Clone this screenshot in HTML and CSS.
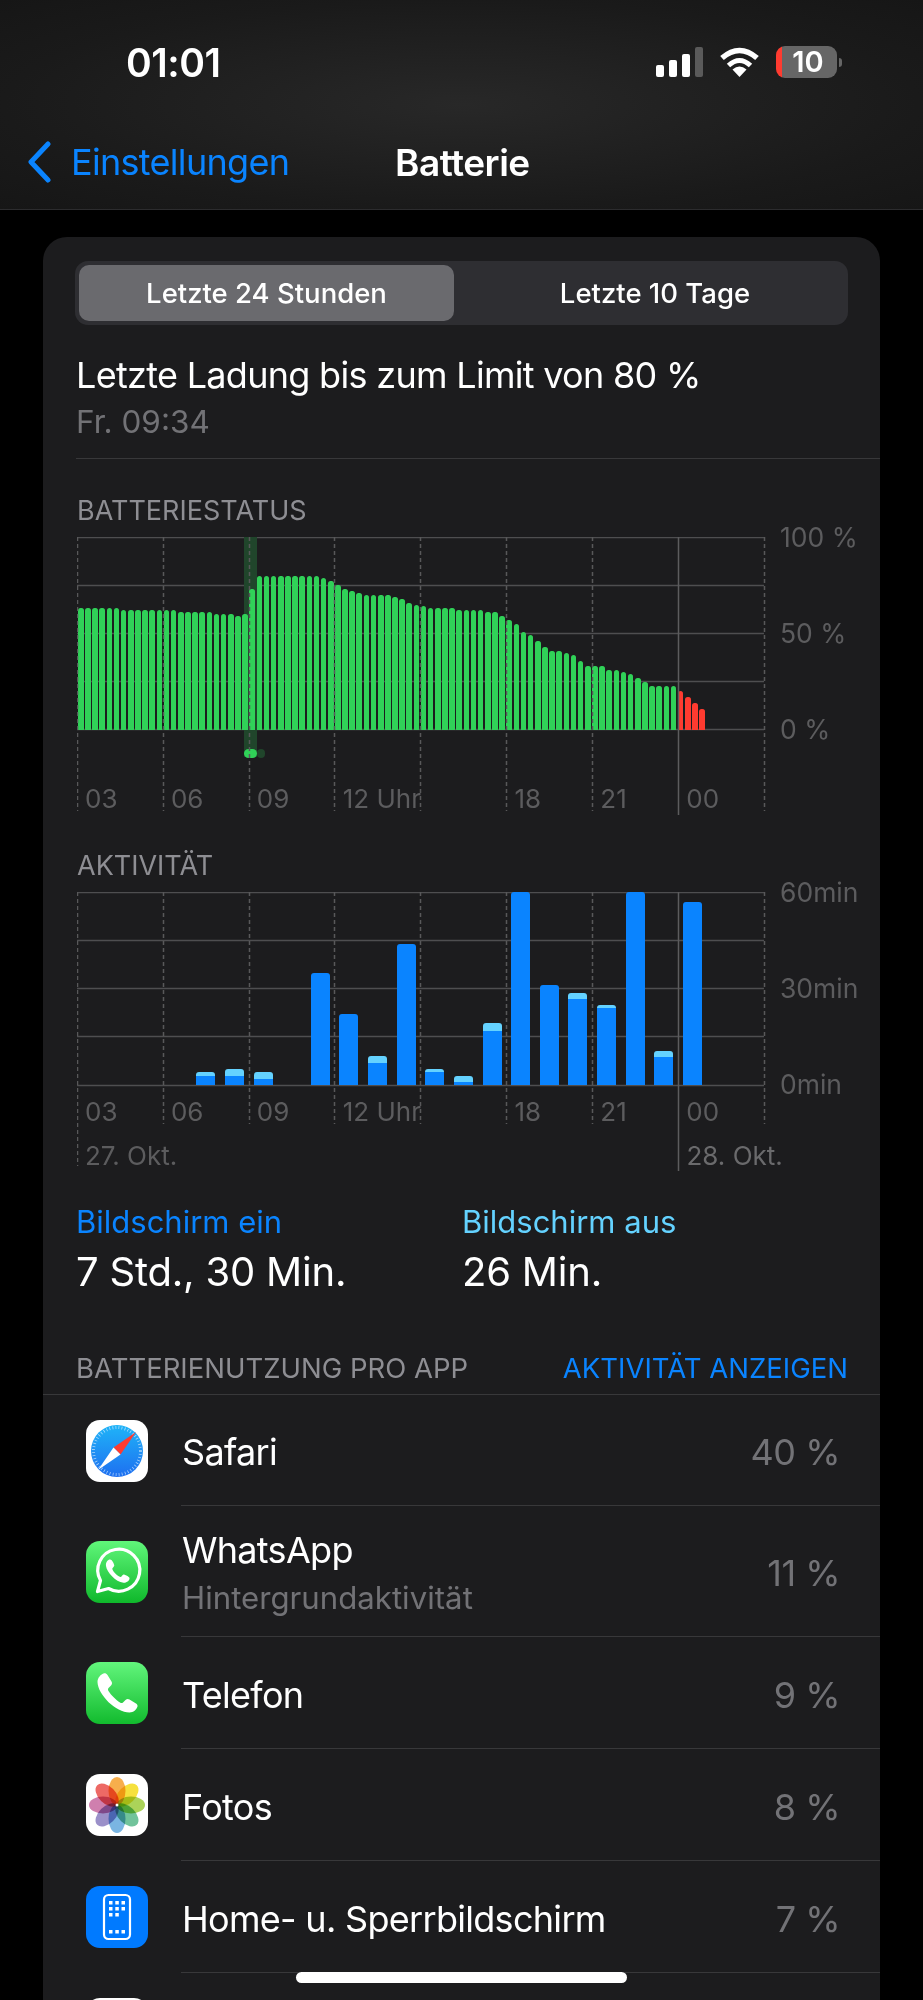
FILE: index.html
```html
<!DOCTYPE html>
<html lang="de">
<head>
    <meta charset="UTF-8">
    <meta name="viewport" content="width=device-width, initial-scale=1.0">
    <title>Batterie</title>
    <link rel="stylesheet" href="styles.css">
</head>
<body>

    <header class="topbar">
        <div class="status">
            <span class="clock">01:01</span>
            <div class="status-icons">
                <div class="signal"><i class="s1"></i><i class="s2"></i><i class="s3"></i><i class="s4"></i></div>
                <svg class="wifi" width="41" height="30" viewBox="0 0 41 30">
                    <path d="M20.500 30 L13.500 22.500 Q20.500 16.500 27.500 22.500 Z" fill="#fff"/>
                    <path d="M9.500 18.500 Q20.500 8.500 31.500 18.500" fill="none" stroke="#fff" stroke-width="5"/>
                    <path d="M3 11 Q20.500 -4 38 11" fill="none" stroke="#fff" stroke-width="5.500"/>
                </svg>
                <div class="battery">
                    <div class="battery-body"><span>10</span></div>
                    <i class="battery-nub"></i>
                </div>
            </div>
        </div>
        <nav class="nav">
            <a class="back">
                <svg width="25" height="42" viewBox="0 0 25 42"><path d="M21 3 L4 21 L21 39" fill="none" stroke="#0a84ff" stroke-width="5" stroke-linecap="round" stroke-linejoin="round"/></svg>
                <span>Einstellungen</span>
            </a>
            <h1>Batterie</h1>
        </nav>
    </header>

    <main class="card">
        <div class="segmented">
            <div class="seg seg-active">Letzte 24 Stunden</div>
            <div class="seg">Letzte 10 Tage</div>
        </div>

        <div class="last-charge">
            <div class="last-title">Letzte Ladung bis zum Limit von 80 %</div>
            <div class="last-time">Fr. 09:34</div>
        </div>

        <section class="chart-section battery-section">
            <h2 class="chart-title">BATTERIESTATUS</h2>
            <div class="chart chart-battery">
                <svg class="grid" width="690" height="280">
                    <path class="grid-h" d="M0 .5H687M0 48.500H687M0 96.500H687M0 144.500H687M0 192.500H687"/>
                </svg>
                <div class="charging-band"></div>
                <div class="charging-pill"></div>
                <div class="charging-dot"></div>
                <div class="level-bars">
                    <i style="height:63%"></i><i style="height:63%"></i><i style="height:63%"></i><i style="height:63%"></i><i style="height:63%"></i><i style="height:63%"></i>
                    <i style="height:62%"></i><i style="height:62%"></i><i style="height:62%"></i><i style="height:62%"></i><i style="height:62%"></i><i style="height:62%"></i><i style="height:62%"></i><i style="height:62%"></i>
                    <i style="height:61%"></i><i style="height:61%"></i><i style="height:61%"></i><i style="height:61%"></i><i style="height:61%"></i>
                    <i style="height:60%"></i><i style="height:60%"></i><i style="height:60%"></i><i style="height:59%"></i><i style="height:60%"></i>
                    <i style="height:73%"></i>
                    <i style="height:80%"></i><i style="height:80%"></i><i style="height:80%"></i><i style="height:80%"></i><i style="height:80%"></i><i style="height:80%"></i><i style="height:80%"></i><i style="height:80%"></i><i style="height:80%"></i>
                    <i style="height:79%"></i><i style="height:77%"></i><i style="height:75%"></i><i style="height:73%"></i><i style="height:72%"></i><i style="height:71%"></i>
                    <i style="height:70%"></i><i style="height:70%"></i><i style="height:70%"></i><i style="height:70%"></i>
                    <i style="height:69%"></i><i style="height:68%"></i><i style="height:66%"></i><i style="height:65%"></i><i style="height:64%"></i>
                    <i style="height:63%"></i><i style="height:63%"></i><i style="height:63%"></i><i style="height:63%"></i>
                    <i style="height:62%"></i><i style="height:62%"></i><i style="height:62%"></i><i style="height:62%"></i>
                    <i style="height:61%"></i><i style="height:61%"></i><i style="height:59%"></i><i style="height:57%"></i><i style="height:55%"></i><i style="height:51%"></i><i style="height:49%"></i><i style="height:46%"></i><i style="height:43%"></i>
                    <i style="height:41%"></i><i style="height:41%"></i><i style="height:40%"></i><i style="height:39%"></i><i style="height:36%"></i>
                    <i style="height:33%"></i><i style="height:33%"></i><i style="height:33%"></i><i style="height:31%"></i><i style="height:31%"></i>
                    <i style="height:30%"></i><i style="height:29%"></i><i style="height:27%"></i><i style="height:25%"></i>
                    <i style="height:23%"></i><i style="height:23%"></i><i style="height:23%"></i><i style="height:23%"></i>
                    <i class="low" style="height:20%"></i><i class="low" style="height:17%"></i><i class="low" style="height:14%"></i><i class="low" style="height:11%"></i>
                </div>
                <svg class="grid" width="690" height="280">
                    <path class="grid-v" d="M.5 0V274M86.500 0V274M172.500 0V274M257.500 0V274M343.500 0V274M429.500 0V274M515.500 0V274M687.500 0V274"/>
                    <path class="grid-now" d="M601.500 0V278"/>
                </svg>
                <div class="y-labels">
                    <span>100 %</span>
                    <span>50 %</span>
                    <span>0 %</span>
                </div>
                <div class="x-labels">
                    <span>03</span><span>06</span><span>09</span><span>12 Uhr</span><span></span><span>18</span><span>21</span><span>00</span>
                </div>
            </div>
        </section>

        <section class="chart-section activity-section">
            <h2 class="chart-title">AKTIVITÄT</h2>
            <div class="chart chart-activity">
                <svg class="grid" width="690" height="310">
                    <path class="grid-h" d="M0 .5H687M0 48.500H687M0 96.500H687M0 144.500H687M0 193.500H687"/>
                </svg>
                <div class="usage-bars">
                    <div></div><div></div><div></div><div></div>
                    <div><i class="off" style="height:2%"></i><i class="on" style="height:4.700%"></i></div>
                    <div><i class="off" style="height:3.400%"></i><i class="on" style="height:4.700%"></i></div>
                    <div><i class="off" style="height:3.400%"></i><i class="on" style="height:3.200%"></i></div>
                    <div></div>
                    <div><i class="on" style="height:58%"></i></div>
                    <div><i class="on" style="height:36.600%"></i></div>
                    <div><i class="off" style="height:3.400%"></i><i class="on" style="height:11.400%"></i></div>
                    <div><i class="on" style="height:73.200%"></i></div>
                    <div><i class="off" style="height:1.600%"></i><i class="on" style="height:6.500%"></i></div>
                    <div><i class="off" style="height:3.300%"></i><i class="on" style="height:1.400%"></i></div>
                    <div><i class="off" style="height:4.200%"></i><i class="on" style="height:28%"></i></div>
                    <div><i class="on" style="height:100%"></i></div>
                    <div><i class="on" style="height:51.800%"></i></div>
                    <div><i class="off" style="height:2.900%"></i><i class="on" style="height:44.700%"></i></div>
                    <div><i class="off" style="height:1.700%"></i><i class="on" style="height:40%"></i></div>
                    <div><i class="on" style="height:100%"></i></div>
                    <div><i class="off" style="height:3.100%"></i><i class="on" style="height:14.700%"></i></div>
                    <div><i class="on" style="height:94.800%"></i></div>
                    <div></div><div></div>
                </div>
                <svg class="grid" width="690" height="310">
                    <path class="grid-v" d="M.5 0V274M86.500 0V232M172.500 0V232M257.500 0V232M343.500 0V232M429.500 0V232M515.500 0V232M687.500 0V232"/>
                    <path class="grid-now" d="M601.500 0V279"/>
                </svg>
                <div class="y-labels">
                    <span>60min</span>
                    <span>30min</span>
                    <span>0min</span>
                </div>
                <div class="x-labels">
                    <span>03</span><span>06</span><span>09</span><span>12 Uhr</span><span></span><span>18</span><span>21</span><span>00</span>
                </div>
                <div class="date-labels">
                    <span>27. Okt.</span>
                    <span>28. Okt.</span>
                </div>
            </div>
        </section>

        <div class="screen-times">
            <div>
                <div class="time-label time-on">Bildschirm ein</div>
                <div class="time-value">7 Std., 30 Min.</div>
            </div>
            <div>
                <div class="time-label time-off">Bildschirm aus</div>
                <div class="time-value">26 Min.</div>
            </div>
        </div>

        <div class="usage-head">
            <span>BATTERIENUTZUNG PRO APP</span>
            <a>AKTIVITÄT ANZEIGEN</a>
        </div>

        <ul class="apps">
            <li class="app">
                <svg class="app-icon" viewBox="0 0 62 62">
                    <defs>
                        <linearGradient id="safariBlue" x1="0" y1="0" x2="0" y2="1"><stop offset="0" stop-color="#1fb4f8"/><stop offset="1" stop-color="#1e6ff0"/></linearGradient>
                    </defs>
                    <rect width="62" height="62" rx="14" fill="#fff"/>
                    <circle cx="31" cy="31" r="26" fill="url(#safariBlue)"/>
                    <circle cx="31" cy="31" r="23.500" fill="none" stroke="#d8ecff" stroke-width="3" stroke-dasharray=".8 2.300" opacity=".75"/>
                    <path d="M27.500 27.500 L50 12 L34.500 34.500 Z" fill="#ff3b30"/>
                    <path d="M27.500 27.500 L34.500 34.500 L12 50 Z" fill="#fff"/>
                </svg>
                <div class="app-name">Safari</div>
                <div class="app-value">40 %</div>
            </li>
            <li class="app app-tall">
                <svg class="app-icon" viewBox="0 0 62 62">
                    <defs>
                        <linearGradient id="waGreen" x1="0" y1="0" x2="0" y2="1"><stop offset="0" stop-color="#60f67a"/><stop offset="1" stop-color="#0fb82b"/></linearGradient>
                    </defs>
                    <rect width="62" height="62" rx="14" fill="url(#waGreen)"/>
                    <path d="M11.500 50.500 L14.500 39.500 A21 21 0 1 1 22.500 47.500 Z" fill="none" stroke="#fff" stroke-width="3.200" stroke-linejoin="round"/>
                    <path d="M24 18.500 C22 18.500 19.500 21 20 25 C20.800 31 29.500 41 37.500 41.800 C41 42 43.800 39.500 43.500 36.800 C43.300 35.800 38.500 33.300 37.500 33.500 C36.500 33.800 35.500 36 34.500 36 C31.500 35.500 26.500 30 26.300 27.800 C26.300 26.800 28.300 25.500 28.300 24.500 C28.300 23.500 26.500 18.500 24 18.500 Z" fill="#fff"/>
                </svg>
                <div class="app-name">WhatsApp<small>Hintergrundaktivität</small></div>
                <div class="app-value">11 %</div>
            </li>
            <li class="app">
                <svg class="app-icon" viewBox="0 0 62 62">
                    <defs>
                        <linearGradient id="phoneGreen" x1="0" y1="0" x2="0" y2="1"><stop offset="0" stop-color="#62f57c"/><stop offset="1" stop-color="#12bb2e"/></linearGradient>
                    </defs>
                    <rect width="62" height="62" rx="14" fill="url(#phoneGreen)"/>
                    <path d="M17.500 11.500 C14.500 12.500 11.500 16 11.500 20 C12 33 30 50.500 43.500 50.500 C47.500 50.500 50.500 47.500 51.500 44.500 C51.800 43.200 51 42.200 50 41.500 L43.500 37.500 C42 36.600 40.800 36.800 39.500 38 L37 40.500 C36 41.300 35 41.200 34 40.500 C30 38 25 33 22.500 29 C21.800 28 21.800 27 22.500 26 L25 23.500 C26.200 22.200 26.300 21 25.500 19.500 L21.500 13 C20.500 11.500 19 11 17.500 11.500 Z" fill="#fff"/>
                </svg>
                <div class="app-name">Telefon</div>
                <div class="app-value">9 %</div>
            </li>
            <li class="app">
                <svg class="app-icon" viewBox="0 0 62 62">
                    <rect width="62" height="62" rx="14" fill="#fff"/>
                    <g class="petals">
                        <ellipse cx="31" cy="17" rx="8.500" ry="14" fill="#f6a02c"/>
                        <ellipse cx="31" cy="17" rx="8.500" ry="14" fill="#f5dc1c" transform="rotate(45 31 31)"/>
                        <ellipse cx="31" cy="17" rx="8.500" ry="14" fill="#9ccb3b" transform="rotate(90 31 31)"/>
                        <ellipse cx="31" cy="17" rx="8.500" ry="14" fill="#58b989" transform="rotate(135 31 31)"/>
                        <ellipse cx="31" cy="17" rx="8.500" ry="14" fill="#62a8dd" transform="rotate(180 31 31)"/>
                        <ellipse cx="31" cy="17" rx="8.500" ry="14" fill="#8a7cc0" transform="rotate(225 31 31)"/>
                        <ellipse cx="31" cy="17" rx="8.500" ry="14" fill="#c768a0" transform="rotate(270 31 31)"/>
                        <ellipse cx="31" cy="17" rx="8.500" ry="14" fill="#ea4f4a" transform="rotate(315 31 31)"/>
                    </g>
                    <circle cx="31" cy="31" r="1.500" fill="#fff"/>
                </svg>
                <div class="app-name">Fotos</div>
                <div class="app-value">8 %</div>
            </li>
            <li class="app">
                <svg class="app-icon" viewBox="0 0 62 62">
                    <rect width="62" height="62" rx="14" fill="#007aff"/>
                    <rect x="18" y="9" width="26" height="44" rx="4.500" fill="none" stroke="#fff" stroke-width="2.200"/>
                    <path d="M23 15h3.500v3.500H23zM29.300 15h3.500v3.500h-3.500zM35.500 15H39v3.500h-3.500zM23 21h3.500v3.500H23zM29.300 21h3.500v3.500h-3.500zM35.500 21H39v3.500h-3.500zM23 27h3.500v3.500H23zM29.300 27h3.500v3.500h-3.500zM23 44h3.500v3.500H23zM29.300 44h3.500v3.500h-3.500zM35.500 44H39v3.500h-3.500z" fill="#fff"/>
                </svg>
                <div class="app-name">Home- u. Sperrbildschirm</div>
                <div class="app-value">7 %</div>
            </li>
            <li class="app">
                <svg class="app-icon" viewBox="0 0 62 62"><rect width="62" height="62" rx="14" fill="#fff"/></svg>
            </li>
        </ul>
    </main>

    <div class="home-indicator"></div>

</body>
</html>
```

FILE: styles.css
```css
* {
    box-sizing: border-box;
}

html, body {
    margin: 0;
    height: 2000px;
    overflow: hidden;
}

body {
    font-family: Inter, "Noto Sans", sans-serif;
    background: #000;
    color: #fff;
    position: relative;
}

.topbar {
    height: 210px;
    background: radial-gradient(ellipse at 50% 50%, #282828 0%, #1a1a1a 70%, #161616 100%);
    border-bottom: 1px solid #2c2c2e;
}

.status {
    height: 118px;
    padding: 42px 0 0 126px;
    display: flex;
    justify-content: space-between;
}

.clock {
    font-size: 39px;
    font-weight: 600;
    line-height: 42px;
    letter-spacing: -0.5px;
}

.status-icons {
    display: flex;
    align-items: flex-start;
    gap: 16px;
    padding-right: 81px;
}

.signal {
    display: flex;
    align-items: flex-end;
    gap: 5px;
    height: 30px;
    margin-top: 5px;
}

.signal i {
    width: 8px;
    border-radius: 2px;
    background: #fff;
}

.s1 { height: 12px; }
.s2 { height: 17px; }
.s3 { height: 23px; }
.s4 { height: 30px; background: #5a5a5a !important; }

.wifi {
    margin-top: 5px;
}

.battery {
    display: flex;
    align-items: center;
    margin-top: 4px;
}

.battery-body {
    width: 61px;
    height: 32px;
    border-radius: 9px;
    background: linear-gradient(to right, #ff3b30 6px, #666 6px);
    font-size: 29px;
    font-weight: 600;
    line-height: 32px;
    text-align: center;
    padding-left: 3px;
}

.battery-nub {
    width: 3px;
    height: 9px;
    margin-left: 2px;
    border-radius: 0 3px 3px 0;
    background: #666;
}

.nav {
    position: relative;
    height: 92px;
    display: flex;
    align-items: center;
    padding: 0 0 4px 27px;
}

.back {
    display: flex;
    align-items: center;
    gap: 19px;
    color: #0a84ff;
    font-size: 36px;
    letter-spacing: -0.7px;
}

.nav h1 {
    margin: 0;
    position: absolute;
    left: 395px;
    font-size: 37px;
    font-weight: 600;
    letter-spacing: -0.5px;
}

.card {
    margin: 27px 43px 0 43px;
    height: 1763px;
    overflow: hidden;
    background: #1c1c1e;
    border-radius: 24px 24px 0 0;
    padding-top: 24px;
}

.segmented {
    margin: 0 32px;
    height: 64px;
    padding: 4px;
    display: flex;
    background: #2e2e32;
    border-radius: 13px;
}

.seg {
    width: 375px;
    display: flex;
    align-items: center;
    justify-content: center;
    font-size: 27.500px;
    font-weight: 500;
    border-radius: 10px;
    flex: none;
}

.seg:last-child {
    flex: 1;
    padding-left: 12px;
}

.seg-active {
    background: #6a6a6e;
}

.last-charge {
    margin-left: 33px;
    padding-top: 28px;
    height: 134px;
    border-bottom: 1px solid #38383a;
}

.last-title {
    font-size: 36px;
    line-height: 44px;
    letter-spacing: -0.7px;
}

.last-time {
    font-size: 31.500px;
    line-height: 40px;
    margin-top: 5px;
    color: #727276;
}

.chart-section {
    padding-left: 34px;
}

.battery-section {
    padding-top: 36px;
    height: 391px;
}

.activity-section {
    height: 338px;
}

.chart-title {
    margin: 0;
    font-size: 27px;
    font-weight: 400;
    line-height: 32px;
    color: #8e8e93;
}

.chart {
    position: relative;
    width: 687px;
    margin-top: 10px;
}

.grid {
    position: absolute;
    left: 0;
    top: 0;
}

.grid-h {
    stroke: #4e4e50;
    stroke-width: 1.500;
    fill: none;
}

.grid-v {
    stroke: #58585a;
    stroke-width: 1.500;
    stroke-dasharray: 4 3;
    fill: none;
}

.grid-now {
    stroke: #5c5c5e;
    stroke-width: 1.500;
    fill: none;
}

.charging-band {
    position: absolute;
    left: 167px;
    top: 0;
    width: 13px;
    height: 220px;
    background: #20452b;
}

.charging-pill {
    position: absolute;
    left: 167px;
    top: 212px;
    width: 13px;
    height: 9px;
    border-radius: 5px;
    background: #30d158;
}

.charging-dot {
    position: absolute;
    left: 180px;
    top: 212px;
    width: 8px;
    height: 9px;
    border-radius: 5px;
    background: #20452b;
}

.level-bars {
    position: relative;
    height: 193px;
    padding-left: 1px;
    display: flex;
    align-items: flex-end;
    gap: 1.550px;
}

.level-bars i {
    width: 5.600px;
    flex: none;
    border-radius: 2.500px 2.500px 0 0;
    background: #30d158;
}

.level-bars .low {
    background: #ff3b30;
}

.usage-bars {
    position: relative;
    height: 193px;
    display: grid;
    grid-template-columns: repeat(24, 1fr);
    width: 687px;
}

.usage-bars div {
    height: 193px;
    padding: 0 4.800px;
    display: flex;
    flex-direction: column;
    justify-content: flex-end;
}

.usage-bars .on {
    background: #0a84ff;
}

.usage-bars .off {
    background: #64d2ff;
}

.usage-bars i:first-child {
    border-radius: 3px 3px 0 0;
}

.y-labels {
    position: absolute;
    left: 703px;
    top: -15px;
    height: 222px;
    display: flex;
    flex-direction: column;
    justify-content: space-between;
    font-size: 26.500px;
    line-height: 30px;
    color: #5c5c5e;
    white-space: nowrap;
}

.x-labels {
    display: grid;
    grid-template-columns: repeat(8, 85.900px);
    position: relative;
    font-size: 26px;
    line-height: 30px;
    color: #5c5c5e;
}

.x-labels span {
    padding-left: 8px;
    white-space: nowrap;
}

.chart-battery .x-labels {
    margin-top: 54px;
}

.chart-activity .x-labels {
    margin-top: 12px;
}

.date-labels {
    display: grid;
    grid-template-columns: 601.500px 1fr;
    position: relative;
    margin-top: 14px;
    font-size: 26px;
    line-height: 30px;
    color: #5c5c5e;
    white-space: nowrap;
}

.date-labels span {
    padding-left: 8px;
}

.date-labels span:last-child {
    color: #6a6a6c;
}

.screen-times {
    display: grid;
    grid-template-columns: 386px 1fr;
    padding-left: 33px;
    margin-top: 14px;
}

.time-label {
    font-size: 31px;
    line-height: 40px;
}

.time-on {
    color: #0a84ff;
}

.time-off {
    color: #64d2ff;
}

.time-value {
    font-size: 40px;
    line-height: 50px;
    margin-top: 5px;
    letter-spacing: -0.2px;
}

.usage-head {
    margin-top: 55px;
    height: 43px;
    padding: 0 32px 0 33px;
    display: flex;
    justify-content: space-between;
    align-items: flex-start;
    font-size: 27.500px;
    line-height: 32px;
    color: #8e8e93;
    border-bottom: 1px solid #38383a;
}

.usage-head a {
    color: #0a84ff;
}

.apps {
    list-style: none;
    margin: 0;
    padding: 0;
}

.app {
    height: 112px;
    padding-left: 43px;
    display: flex;
    align-items: center;
    position: relative;
}

.app:first-child {
    height: 111px;
}

.app-tall {
    height: 131px;
}

.app:not(:last-child)::after {
    content: "";
    position: absolute;
    left: 138px;
    right: 0;
    bottom: 0;
    height: 1px;
    background: #38383a;
}

.app-icon {
    width: 62px;
    height: 62px;
    flex: none;
}

.petals ellipse {
    mix-blend-mode: multiply;
    opacity: .85;
}

.app-name {
    margin: 3px 0 0 34px;
    flex: 1;
    font-size: 36px;
    line-height: 44px;
    letter-spacing: -0.7px;
}

.app-name small {
    display: block;
    font-size: 31.200px;
    line-height: 40px;
    margin-top: 6px;
    letter-spacing: 0;
    color: #727276;
}

.app-value {
    margin: 3px 40px 0 0;
    font-size: 36px;
    letter-spacing: -0.5px;
    color: #727276;
}

.home-indicator {
    position: absolute;
    left: 296px;
    top: 1972px;
    width: 331px;
    height: 11px;
    border-radius: 6px;
    background: #fff;
}
```
